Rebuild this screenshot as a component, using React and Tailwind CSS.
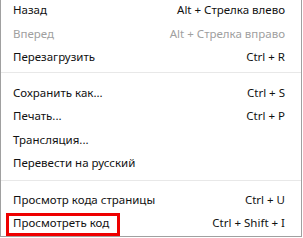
import React from "react";

const Row = ({ label, shortcut, disabled, boxed }) => (
  <div className={`relative flex h-[23.5px] items-center justify-between pl-[12px] pr-[16px] ${disabled ? "text-[#a0a0a0]" : "text-[#111111]"}`}>
    <span>{label}</span>
    <span>{shortcut}</span>
    {boxed && (
      <div className="pointer-events-none absolute left-[5px] top-[1.75px] h-[23px] w-[114px] border-[3px] border-[#ee0000]" />
    )}
  </div>
);

const Sep = ({ cls }) => <div className={`h-px bg-[#e8e8e8] ${cls}`} />;

export default function App() {
  return (
    <div className="h-[238px] w-[303px] bg-white">
      <div
        className="h-[237px] w-[302px] overflow-hidden border-b border-l border-r border-[#a0a0a0] text-[11.5px]"
        style={{ fontFamily: '"Noto Sans", "Open Sans", sans-serif' }}
      >
        <div className="-mt-[1.75px]">
          <Row label="Назад" shortcut="Alt + Стрелка влево" />
          <Row label="Вперед" shortcut="Alt + Стрелка вправо" disabled />
          <Row label="Перезагрузить" shortcut="Ctrl + R" />
          <Sep cls="mt-[3px] mb-[8px]" />
          <Row label="Сохранить как..." shortcut="Ctrl + S" />
          <Row label="Печать..." shortcut="Ctrl + P" />
          <Row label="Трансляция..." shortcut="" />
          <Row label="Перевести на русский" shortcut="" />
          <Sep cls="mt-[5px] mb-[7px]" />
          <Row label="Просмотр кода страницы" shortcut="Ctrl + U" />
          <Row label="Просмотреть код" shortcut="Ctrl + Shift + I" boxed />
        </div>
      </div>
    </div>
  );
}
